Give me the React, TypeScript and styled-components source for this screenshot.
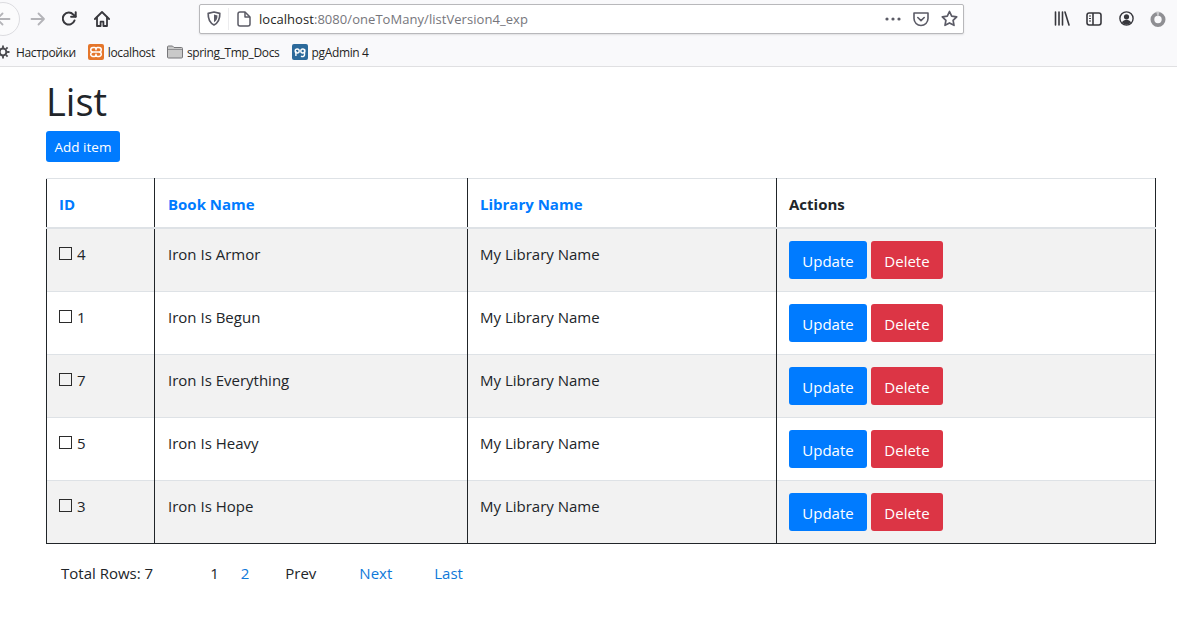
import React from "react";
import styled, { createGlobalStyle } from "styled-components";

const Global = createGlobalStyle`
  html, body { margin: 0; padding: 0; background: #fff; overflow: hidden; }
  body { font-family: "Open Sans", "Liberation Sans", sans-serif; color: #212529; }
  * { box-sizing: border-box; }
`;

const Chrome = styled.header`
  height: 67px;
  background: #f9f9fb;
  border-bottom: 1px solid #e0e0e2;
  overflow: hidden;
`;
const Toolbar = styled.div`
  height: 37px;
  display: flex;
  align-items: center;
`;
const BackCircle = styled.div`
  width: 34px;
  height: 34px;
  margin-left: -14px;
  margin-right: 2px;
  flex: none;
  border-radius: 50%;
  border: 1px solid #dcdce0;
  background: #fbfbfc;
  display: flex;
  align-items: center;
  justify-content: center;
`;
const NavSlot = styled.div`
  width: 32px;
  height: 32px;
  flex: none;
  display: flex;
  align-items: center;
  justify-content: center;
`;
const UrlBar = styled.div`
  margin-left: 81px;
  width: 765px;
  height: 30px;
  flex: none;
  background: #fff;
  border: 1px solid #b8b8bb;
  border-radius: 2px;
  box-shadow: 0 1px 2px rgba(0,0,0,.1);
  display: flex;
  align-items: center;
  padding-left: 7px;
`;
const UrlDivider = styled.span`
  width: 1px;
  height: 22px;
  background: #ececee;
  margin: 0 8px 0 7px;
`;
const UrlText = styled.span`
  margin-left: 8px;
  font-size: 13px;
  letter-spacing: 0.05px;
  color: #76767c;
  flex: 1;
  white-space: nowrap;
`;
const UrlHost = styled.span`
  color: #1f1f23;
`;
const UrlActions = styled.div`
  display: flex;
  align-items: center;
  gap: 12px;
  padding-right: 5px;
`;
const RightTools = styled.div`
  margin-left: 82px;
  display: flex;
  align-items: center;
`;
const Bookmarks = styled.nav`
  height: 29px;
  padding-top: 1px;
  display: flex;
  align-items: center;
  margin-left: -4px;
`;
const Bookmark = styled.div<{ $iconGap?: number }>`
  display: flex;
  align-items: center;
  gap: ${(p) => p.$iconGap ?? 4}px;
  margin-right: 12px;
  font-size: 12px;
  letter-spacing: -0.35px;
  color: #1f1f23;
  white-space: nowrap;
`;

const Main = styled.main`
  padding: 10px 21px 0 46px;
`;
const Title = styled.h1`
  margin: 0 0 6px;
  font-size: 38px;
  line-height: 48px;
  font-weight: 400;
  color: #212529;
`;
const Btn = styled.button<{ $variant: "primary" | "danger"; $small?: boolean }>`
  display: inline-block;
  border: 0;
  border-radius: 3px;
  font-family: inherit;
  color: #fff;
  background: ${(p) => (p.$variant === "primary" ? "#007bff" : "#dc3545")};
  height: ${(p) => (p.$small ? 31 : 38)}px;
  width: ${(p) => (p.$variant === "danger" ? 72 : p.$small ? 74 : 78)}px;
  font-size: ${(p) => (p.$small ? 13.5 : 15)}px;
  padding: 1px 0 0;
  margin-right: ${(p) => (p.$small ? 0 : 4)}px;
  vertical-align: top;
`;
const Table = styled.table`
  margin-top: 16px;
  width: 1110px;
  table-layout: fixed;
  border-collapse: collapse;
  font-size: 15px;
  border-bottom: 1px solid #212529;
`;
const Th = styled.th`
  padding: 13px 12px 11px;
  height: 49px;
  text-align: left;
  font-weight: 700;
  font-size: 15px;
  line-height: 24px;
  border-top: 1px solid #dee2e6;
  border-bottom: 2px solid #dee2e6;
  border-left: 1px solid #212529;
  border-right: 1px solid #212529;
  &:nth-child(2) { padding-left: 13px; }
`;
const HeadLink = styled.a`
  color: #007bff;
`;
const Row = styled.tr<{ $odd: boolean }>`
  background: ${(p) => (p.$odd ? "#f2f2f2" : "#fff")};
`;
const Td = styled.td<{ $actions?: boolean }>`
  padding: ${(p) => (p.$actions ? "12px" : "13px 12px 11px")};
  height: 63px;
  line-height: 24px;
  vertical-align: top;
  color: #212529;
  border-top: 1px solid #dee2e6;
  border-left: 1px solid #212529;
  border-right: 1px solid #212529;
  &:nth-child(2) { padding-left: 13px; }
`;
const Check = styled.input`
  appearance: none;
  width: 13px;
  height: 13px;
  margin: 0 5px 0 0;
  border: 1px solid #2b2b2b;
  background: transparent;
  vertical-align: 0;
`;
const Footer = styled.div`
  display: flex;
  align-items: center;
  margin-top: 17px;
  padding-left: 15px;
  font-size: 15px;
  line-height: 24px;
`;
const Pager = styled.span<{ $at: number; $link?: boolean }>`
  margin-left: ${(p) => p.$at}px;
  color: ${(p) => (p.$link ? "#0f79d9" : "#212529")};
  white-space: nowrap;
`;

const stroke = "#5b5b66";

const ArrowLeft = () => (
  <svg width="16" height="16" viewBox="0 0 16 16" fill="none" stroke="#b4b4b8" strokeWidth="1.8" strokeLinecap="round" strokeLinejoin="round">
    <path d="M14.5 8H2M7.5 2.5 2 8l5.5 5.5" />
  </svg>
);
const ArrowRight = () => (
  <svg width="16" height="16" viewBox="0 0 16 16" fill="none" stroke="#b4b4b8" strokeWidth="1.8" strokeLinecap="round" strokeLinejoin="round">
    <path d="M1.5 8H14M8.5 2.5 14 8l-5.5 5.5" />
  </svg>
);
const Reload = () => (
  <svg width="16" height="16" viewBox="0 0 16 16" fill="none" stroke="#38383d" strokeWidth="2" strokeLinecap="round" strokeLinejoin="round">
    <path d="M13.5 9.5A6 6 0 1 1 12.3 3.6L14.5 5.5" transform="translate(-1 0)" />
    <path d="M13.700 1.200v4.600h-4.600" />
  </svg>
);
const Home = () => (
  <svg width="16" height="16" viewBox="0 0 16 16" fill="none" stroke="#38383d" strokeWidth="1.8" strokeLinejoin="round" strokeLinecap="round">
    <path d="M.9 8 8 1l7.1 7" />
    <path d="M3 6.5V15h3.600v-4.300h2.800V15H13V6.500" />
  </svg>
);
const Shield = () => (
  <svg width="14" height="15" viewBox="0 0 14 15" fill="none">
    <path d="M1.2 2.4 7 1l5.8 1.4c.2 5.2-1.4 9.4-5.8 11.6C2.6 11.8 1 7.6 1.2 2.4Z" stroke={stroke} strokeWidth="1.7" strokeLinejoin="round" />
    <path d="M7 3.6 10.5 4.4c0 3-.9 5.4-3.5 6.9Z" fill={stroke} />
  </svg>
);
const Page = () => (
  <svg width="14" height="16" viewBox="0 0 14 16" fill="none" stroke={stroke} strokeWidth="1.5" strokeLinejoin="round">
    <path d="M3 1h5l5 5v7a2 2 0 0 1-2 2H3a2 2 0 0 1-2-2V3a2 2 0 0 1 2-2Z" />
    <path d="M8 1v5h5" />
  </svg>
);
const Dots = () => (
  <svg width="16" height="4" viewBox="0 0 16 4" fill={stroke}>
    <circle cx="2" cy="2" r="1.6" />
    <circle cx="8" cy="2" r="1.6" />
    <circle cx="14" cy="2" r="1.6" />
  </svg>
);
const Pocket = () => (
  <svg width="16" height="16" viewBox="0 0 16 16" fill="none" stroke={stroke} strokeWidth="1.6" strokeLinecap="round" strokeLinejoin="round">
    <path d="M1 2h14v5.5A7 7 0 0 1 8 14.5 7 7 0 0 1 1 7.5Z" />
    <path d="M4.8 6.5 8 9.6l3.2-3.1" />
  </svg>
);
const Star = () => (
  <svg width="17" height="17" viewBox="0 0 17 17" fill="none" stroke={stroke} strokeWidth="1.7" strokeLinejoin="round">
    <path d="m8.5 1.5 2.2 4.6 5 .7-3.6 3.5.9 5-4.5-2.4L4 15.3l.9-5L1.3 6.8l5-.7Z" />
  </svg>
);
const Library = () => (
  <svg width="16" height="15" viewBox="0 0 16 15" fill="none" stroke="#38383d" strokeWidth="1.6" strokeLinecap="round">
    <path d="M1.5 1v13M5 1v13M8.5 1v13M11 1l4 13" />
  </svg>
);
const SidebarIcon = () => (
  <svg width="16" height="14" viewBox="0 0 16 14" fill="none" stroke="#38383d" strokeWidth="1.6">
    <rect x="1" y="1" width="14" height="12" rx="2.2" />
    <path d="M7 1v12" />
    <path d="M3 4h2M3 6.5h2M3 9h2" strokeWidth="1.1" />
  </svg>
);
const Account = () => (
  <svg width="15" height="15" viewBox="0 0 15 15" fill="none">
    <circle cx="7.5" cy="7.5" r="6.6" stroke="#38383d" strokeWidth="1.4" />
    <circle cx="7.5" cy="5.8" r="2.6" fill="#38383d" />
    <path d="M2.9 11.5c1-2 2.7-2.8 4.6-2.8s3.6.8 4.6 2.8a6 6 0 0 1-9.2 0Z" fill="#38383d" />
  </svg>
);
const Extension = () => (
  <svg width="16" height="16" viewBox="0 0 16 16" fill="none">
    <circle cx="8" cy="8.5" r="5.6" stroke="#8f8f93" strokeWidth="3.8" />
    <path d="M6.2 0.5h3.2L8.6 5 7.4 5.2Z" fill="#c9c9cc" />
  </svg>
);
const Gear = () => (
  <svg width="14" height="14" viewBox="0 0 14 14" fill="none" stroke="#4a4a4f">
    <circle cx="7" cy="7" r="3.4" strokeWidth="2" />
    <path d="M7 .5v2.4M7 11.1v2.4M.5 7h2.4M11.1 7h2.4M2.4 2.4l1.7 1.7M9.9 9.9l1.7 1.7M2.4 11.6l1.7-1.7M9.9 4.1l1.7-1.7" strokeWidth="1.8" />
  </svg>
);
const Xampp = () => (
  <svg width="16" height="16" viewBox="0 0 16 16">
    <rect width="16" height="16" rx="2" fill="#e5762b" />
    <path d="M5 3.5h1.6c.8 0 1.4 1 1.4 2.2 0-1.2.6-2.2 1.4-2.2H11a2 2 0 0 1 0 4.5H8h3a2 2 0 0 1 0 4.5H9.4c-.8 0-1.4-1-1.4-2.2 0 1.2-.6 2.2-1.4 2.2H5A2 2 0 0 1 5 8h3-3a2 2 0 0 1 0-4.5Z" fill="none" stroke="#fff" strokeWidth="1.5" strokeLinejoin="round" />
  </svg>
);
const Folder = () => (
  <svg width="16" height="14" viewBox="0 0 16 14">
    <path d="M.5 2A1 1 0 0 1 1.5 1h4L7 2.500h7.500a1 1 0 0 1 1 1V12a1 1 0 0 1-1 1h-13a1 1 0 0 1-1-1Z" fill="#c9c9c9" stroke="#77777a" />
    <path d="M1 4.500h14" stroke="#8f8f92" />
  </svg>
);
const Pg = () => (
  <svg width="16" height="16" viewBox="0 0 16 16">
    <rect width="16" height="16" rx="2" fill="#2c6a9b" />
    <circle cx="5.2" cy="7" r="2" fill="none" stroke="#fff" strokeWidth="1.4" />
    <path d="M3.9 7v5" stroke="#fff" strokeWidth="1.4" />
    <circle cx="10.8" cy="7" r="2" fill="none" stroke="#fff" strokeWidth="1.4" />
    <path d="M12.5 5v6a2 2 0 0 1-3.4 1" fill="none" stroke="#fff" strokeWidth="1.4" />
  </svg>
);

const rows = [
  { id: 4, name: "Iron Is Armor" },
  { id: 1, name: "Iron Is Begun" },
  { id: 7, name: "Iron Is Everything" },
  { id: 5, name: "Iron Is Heavy" },
  { id: 3, name: "Iron Is Hope" },
];

export default function App() {
  return (
    <>
      <Global />
      <Chrome>
        <Toolbar>
          <BackCircle><ArrowLeft /></BackCircle>
          <NavSlot><ArrowRight /></NavSlot>
          <NavSlot><Reload /></NavSlot>
          <NavSlot><Home /></NavSlot>
          <UrlBar>
            <Shield />
            <UrlDivider />
            <Page />
            <UrlText><UrlHost>localhost</UrlHost>:8080/oneToMany/listVersion4_exp</UrlText>
            <UrlActions>
              <Dots />
              <Pocket />
              <Star />
            </UrlActions>
          </UrlBar>
          <RightTools>
            <NavSlot><Library /></NavSlot>
            <NavSlot><SidebarIcon /></NavSlot>
            <NavSlot><Account /></NavSlot>
            <NavSlot><Extension /></NavSlot>
          </RightTools>
        </Toolbar>
        <Bookmarks>
          <Bookmark $iconGap={6}><Gear />Настройки</Bookmark>
          <Bookmark><Xampp />localhost</Bookmark>
          <Bookmark><Folder />spring_Tmp_Docs</Bookmark>
          <Bookmark><Pg />pgAdmin 4</Bookmark>
        </Bookmarks>
      </Chrome>
      <Main>
        <Title>List</Title>
        <Btn $variant="primary" $small>Add item</Btn>
        <Table>
          <colgroup>
            <col style={{ width: 108 }} />
            <col style={{ width: 313 }} />
            <col style={{ width: 309 }} />
            <col />
          </colgroup>
          <thead>
            <tr>
              <Th><HeadLink>ID</HeadLink></Th>
              <Th><HeadLink>Book Name</HeadLink></Th>
              <Th><HeadLink>Library Name</HeadLink></Th>
              <Th>Actions</Th>
            </tr>
          </thead>
          <tbody>
            {rows.map((r, i) => (
              <Row key={r.id} $odd={i % 2 === 0}>
                <Td><Check type="checkbox" readOnly />{r.id}</Td>
                <Td>{r.name}</Td>
                <Td>My Library Name</Td>
                <Td $actions>
                  <Btn $variant="primary">Update</Btn>
                  <Btn $variant="danger">Delete</Btn>
                </Td>
              </Row>
            ))}
          </tbody>
        </Table>
        <Footer>
          <Pager $at={0}>Total Rows: 7</Pager>
          <Pager $at={57}>1</Pager>
          <Pager $at={22} $link>2</Pager>
          <Pager $at={36}>Prev</Pager>
          <Pager $at={43} $link>Next</Pager>
          <Pager $at={42} $link>Last</Pager>
        </Footer>
      </Main>
    </>
  );
}
